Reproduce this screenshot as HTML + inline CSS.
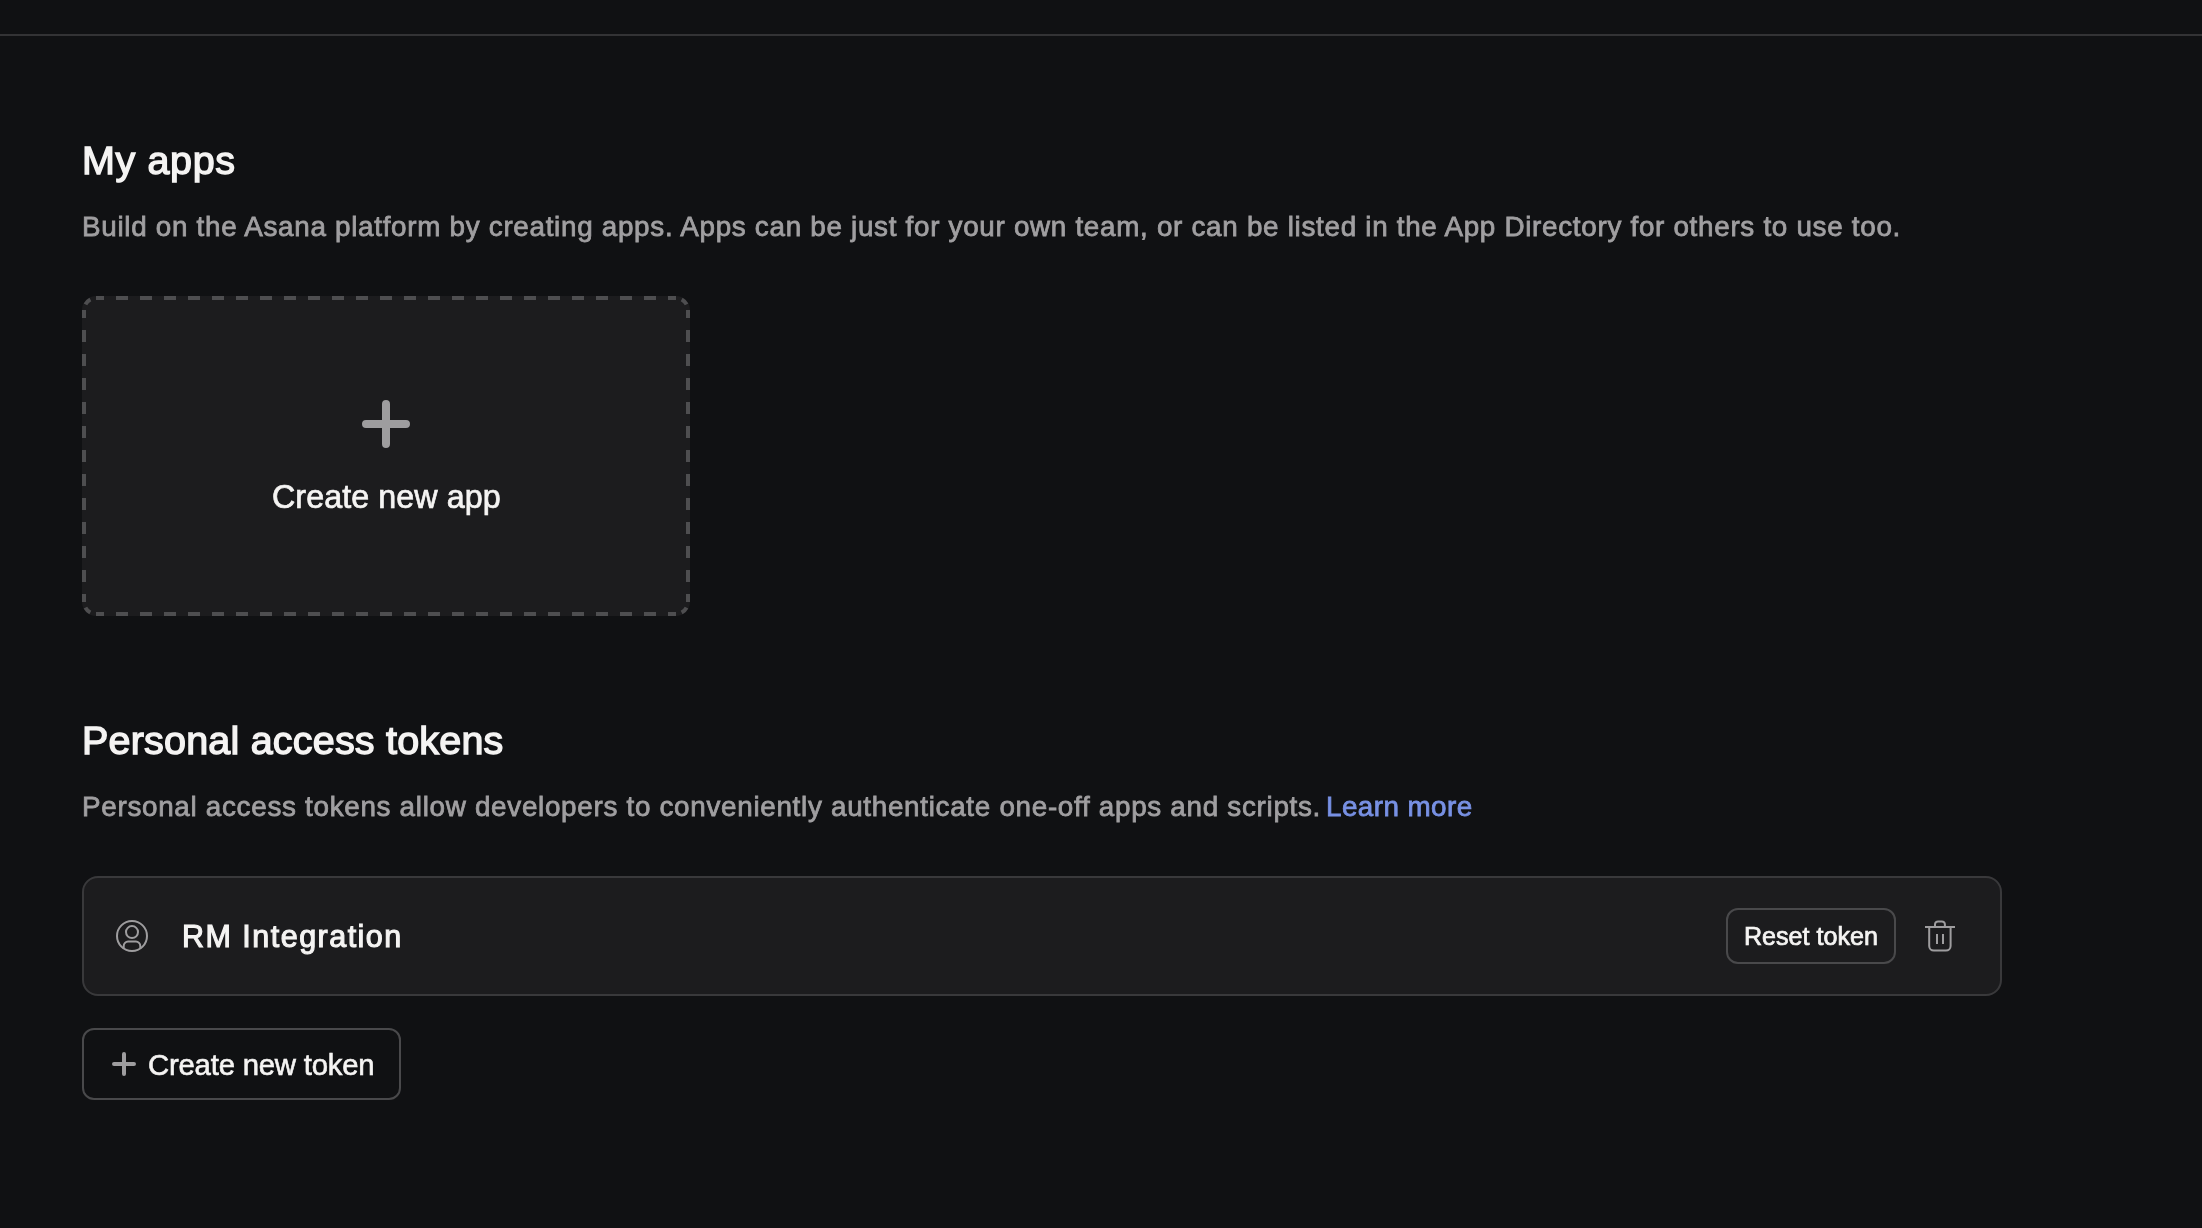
<!DOCTYPE html>
<html>
<head>
<meta charset="utf-8">
<style>
html,body{margin:0;padding:0;background:#101113;}
body{width:2202px;height:1228px;background:#101113;position:relative;overflow:hidden;font-family:"Liberation Sans",sans-serif;}
.abs{position:absolute;white-space:nowrap;will-change:transform;}
.box{position:absolute;box-sizing:border-box;}
</style>
</head>
<body>
<div class="box" style="left:0;top:34px;width:2202px;height:2px;background:#333335;"></div>
<div class="abs" style="left:82px;top:141.26px;font-size:39.5px;line-height:39.5px;letter-spacing:0.63px;color:#f5f4f3;-webkit-text-stroke:1.38px #f5f4f3;">My apps</div>
<div class="abs" style="left:82px;top:213.47px;font-size:27.8px;line-height:27.8px;letter-spacing:0.71px;color:#a09fa1;-webkit-text-stroke:0.8px #a09fa1;">Build on the Asana platform by creating apps. Apps can be just for your own team, or can be listed in the App Directory for others to use too.</div>
<div class="box" style="left:82px;top:296px;width:608px;height:320px;border-radius:14px;background:#1c1c1e;"></div>
<svg class="box" style="left:82px;top:296px;" width="608" height="320" viewBox="0 0 608 320">
 <g stroke="#4e4e50" stroke-width="4" fill="none">
  <path d="M14 2 H594 M14 318 H594" stroke-dasharray="12 12" stroke-dashoffset="4"/>
  <path d="M2 14 V306 M606 14 V306" stroke-dasharray="12 12" stroke-dashoffset="4"/>
  <path d="M2 14 A12 12 0 0 1 14 2 M594 2 A12 12 0 0 1 606 14 M606 306 A12 12 0 0 1 594 318 M14 318 A12 12 0 0 1 2 306" stroke-dasharray="0 5.9 7 30"/>
 </g>
</svg>
<svg class="box" style="left:358px;top:396px;" width="56" height="56" viewBox="0 0 56 56"><path d="M28 8 V48 M8 28 H48" stroke="#9e9d9f" stroke-width="8" stroke-linecap="round" fill="none"/></svg>
<div class="abs" style="left:272px;top:481.26px;font-size:32.3px;line-height:32.3px;letter-spacing:0.05px;color:#f5f4f3;-webkit-text-stroke:0.7px #f5f4f3;">Create new app</div>
<div class="abs" style="left:82px;top:721.26px;font-size:39.5px;line-height:39.5px;letter-spacing:0.2px;color:#f5f4f3;-webkit-text-stroke:1.38px #f5f4f3;">Personal access tokens</div>
<div class="abs" style="left:82px;top:793.47px;font-size:27.8px;line-height:27.8px;letter-spacing:0.71px;color:#a09fa1;-webkit-text-stroke:0.8px #a09fa1;">Personal access tokens allow developers to conveniently authenticate one-off apps and scripts.</div>
<div class="abs" style="left:1326px;top:793.47px;font-size:27.8px;line-height:27.8px;letter-spacing:0.45px;color:#7891e4;-webkit-text-stroke:0.8px #7891e4;">Learn more</div>
<div class="box" style="left:82px;top:876px;width:1920px;height:120px;border:2px solid #39393b;border-radius:16px;background:#1c1c1e;"></div>
<svg class="box" style="left:112px;top:916px;" width="40" height="40" viewBox="0 0 40 40">
 <circle cx="20" cy="20" r="15" stroke="#9e9d9f" stroke-width="2" fill="none"/>
 <circle cx="20" cy="16.1" r="6" stroke="#9e9d9f" stroke-width="2" fill="none"/>
 <path d="M11.7 32.8 V30 A4.4 4.4 0 0 1 16.1 25.6 H23.9 A4.4 4.4 0 0 1 28.3 30 V32.8" stroke="#9e9d9f" stroke-width="2" fill="none"/>
</svg>
<div class="abs" style="left:182px;top:921.48px;font-size:30.5px;line-height:30.5px;letter-spacing:1.48px;color:#f5f4f3;-webkit-text-stroke:1.1px #f5f4f3;">RM Integration</div>
<div class="box" style="left:1726px;top:908px;width:170px;height:56px;border:2px solid #49494b;border-radius:12px;"></div>
<div class="abs" style="left:1744px;top:924.35px;font-size:25.1px;line-height:25.1px;letter-spacing:0px;color:#f5f4f3;-webkit-text-stroke:0.74px #f5f4f3;">Reset token</div>
<svg class="box" style="left:1920px;top:916px;" width="40" height="40" viewBox="0 0 40 40">
 <path d="M5 11 H35 M9.2 11 V30 A4.6 4.6 0 0 0 13.8 34.6 H26 A4.6 4.6 0 0 0 30.6 30 V11 M15 11 V8.4 A3 3 0 0 1 18 5.4 H21.9 A3 3 0 0 1 24.9 8.4 V11 M17 18 V28 M23 18 V28" stroke="#9e9d9f" stroke-width="2" fill="none"/>
</svg>
<div class="box" style="left:82px;top:1028px;width:319px;height:72px;border:2px solid #49494b;border-radius:12px;"></div>
<svg class="box" style="left:108px;top:1048px;" width="32" height="32" viewBox="0 0 32 32"><path d="M16 6 V26 M6 16 H26" stroke="#9e9d9f" stroke-width="4" stroke-linecap="round" fill="none"/></svg>
<div class="abs" style="left:148px;top:1049.50px;font-size:29.3px;line-height:29.3px;letter-spacing:-0.2px;color:#f5f4f3;-webkit-text-stroke:0.6px #f5f4f3;">Create new token</div>
</body>
</html>
